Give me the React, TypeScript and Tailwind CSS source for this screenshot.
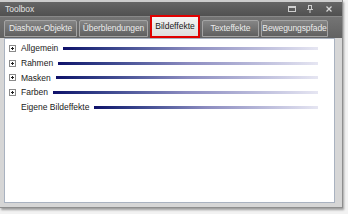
import React from 'react';

const font = { fontFamily: '"Liberation Sans", Arial, sans-serif' };

type Tab = { label: string; width: string; active?: boolean };

const tabs: Tab[] = [
  { label: 'Diashow-Objekte', width: 'w-[73px]' },
  { label: 'Überblendungen', width: 'w-[69px]' },
  { label: 'Bildeffekte', width: 'w-[50px]', active: true },
  { label: 'Texteffekte', width: 'w-[57px]' },
  { label: 'Bewegungspfade', width: 'w-[67px]' },
];

const items = [
  { label: 'Allgemein', expandable: true },
  { label: 'Rahmen', expandable: true },
  { label: 'Masken', expandable: true },
  { label: 'Farben', expandable: true },
  { label: 'Eigene Bildeffekte', expandable: false },
];

function PlusBox() {
  return (
    <span className="relative w-[7px] h-[7px] border border-[#8a8a8a] bg-white shrink-0">
      <span className="absolute left-[1px] top-[2px] w-[3px] h-px bg-[#202020]" />
      <span className="absolute left-[2px] top-[1px] w-px h-[3px] bg-[#202020]" />
    </span>
  );
}

function TitleIcons() {
  return (
    <div className="flex items-center gap-[9px] pr-[10px]">
      <svg width="8" height="6" viewBox="0 0 8 6" className="mr-[2px]">
        <rect x="0.5" y="0.5" width="7" height="5" fill="none" stroke="#cfcfcf" />
        <rect x="0" y="0" width="8" height="2" fill="#cfcfcf" />
      </svg>
      <svg width="6" height="8" viewBox="0 0 6 8" className="mr-[4px]">
        <rect x="1.5" y="0.5" width="3" height="4" fill="none" stroke="#cfcfcf" />
        <rect x="0" y="4" width="6" height="1" fill="#cfcfcf" />
        <rect x="2.5" y="5" width="1" height="3" fill="#cfcfcf" />
      </svg>
      <svg width="6" height="6" viewBox="0 0 6 6">
        <path d="M0.5 0.5 L5.5 5.5 M5.5 0.5 L0.5 5.5" stroke="#d8d8d8" strokeWidth="1.3" />
      </svg>
    </div>
  );
}

export default function App() {
  return (
    <div className="w-[348px] h-[214px] bg-[#f2f2f2] overflow-hidden" style={font}>
      <div className="w-[343px] h-[208px] flex flex-col bg-[#d6d6d6] border-r border-b border-[#8e8e8e] shadow-[1px_2px_2px_rgba(0,0,0,0.35)]">
        {/* title bar */}
        <div className="h-[16px] flex items-center justify-between bg-gradient-to-b from-[#666666] to-[#505050] border-t-2 border-[#cdcdcd]">
          <span className="pl-[5px] text-[8.5px] text-[#e4e4e4] leading-none">Toolbox</span>
          <TitleIcons />
        </div>

        {/* tab strip */}
        <div className="h-[22px] flex items-end gap-[2px] pl-[4px] bg-gradient-to-b from-[#747474] to-[#626262] border-t border-[#888888]">
          {tabs.map((tab) =>
            tab.active ? (
              <div
                key={tab.label}
                className={`${tab.width} h-[23px] -mt-[2px] flex items-center justify-center border-2 border-[#e00000] bg-gradient-to-b from-[#f4f4f4] to-[#dedede] text-[8.5px] text-[#202020] leading-none whitespace-nowrap`}
              >
                {tab.label}
              </div>
            ) : (
              <div
                key={tab.label}
                className={`${tab.width} h-[17px] mb-[1px] flex items-center justify-center rounded-t-[2px] border border-[#a4a4a4] bg-gradient-to-b from-[#858585] to-[#606060] text-[8.5px] tracking-[-0.1px] text-[#ececec] leading-none whitespace-nowrap`}
              >
                {tab.label}
              </div>
            )
          )}
        </div>

        {/* content */}
        <div className="flex-1 pl-[4px] pr-[7px] pb-[4px]">
          <div className="h-full bg-white border border-[#a9b2c0] pt-[2px] pl-[4px] pr-[16px]">
            {items.map((item) => (
              <div key={item.label} className="h-[14.75px] flex items-center">
                {item.expandable ? <PlusBox /> : <span className="w-[7px] shrink-0" />}
                <span className="ml-[5px] text-[8.5px] text-[#1a1a1a] leading-none whitespace-nowrap">
                  {item.label}
                </span>
                <span className="ml-[5px] flex-1 h-[3px] bg-gradient-to-r from-[#10106a] via-[#8c8cc0] to-[#e6e6f2]" />
              </div>
            ))}
          </div>
        </div>
      </div>
    </div>
  );
}
